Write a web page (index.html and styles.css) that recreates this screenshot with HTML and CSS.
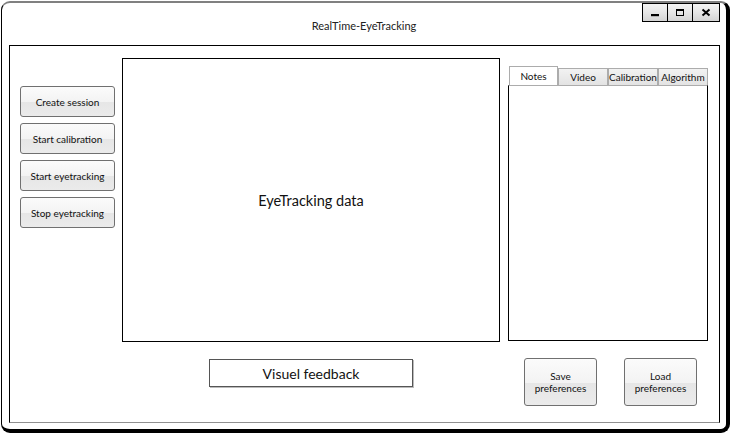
FILE: index.html
```html
<!DOCTYPE html>
<html lang="en">
<head>
  <meta charset="utf-8" />
  <title>RealTime-EyeTracking</title>
  <link rel="stylesheet" href="styles.css">
</head>

<body>
  <div class="window">
    <div class="titlebar">
      <span></span>
      <div class="title">RealTime-EyeTracking</div>
      <div class="controls">
        <div class="ctl">
          <svg width="10" height="8" viewBox="0 0 10 8"><rect x="1" y="5" width="8" height="2.2" fill="#000"/></svg>
        </div>
        <div class="ctl">
          <svg width="10" height="9" viewBox="0 0 10 9"><rect x="1.5" y="1.5" width="7" height="6" fill="none" stroke="#000" stroke-width="1"/><rect x="1" y="1" width="8" height="2" fill="#000"/></svg>
        </div>
        <div class="ctl wide">
          <svg width="10" height="9" viewBox="0 0 10 9"><path d="M1.5 1.5 L8.5 7.5 M8.5 1.5 L1.5 7.5" stroke="#000" stroke-width="2" fill="none"/></svg>
        </div>
      </div>
    </div>

    <div class="panel">
      <div class="actions">
        <button class="btn">Create session</button>
        <button class="btn">Start calibration</button>
        <button class="btn">Start eyetracking</button>
        <button class="btn">Stop eyetracking</button>
      </div>

      <div class="canvas">EyeTracking data</div>

      <div class="tabs">
        <div class="tab-strip">
          <div class="tab active">Notes</div>
          <div class="tab">Video</div>
          <div class="tab">Calibration</div>
          <div class="tab">Algorithm</div>
        </div>
        <div class="tab-body"></div>
      </div>

      <div class="feedback">Visuel feedback</div>

      <div class="prefs">
        <button class="btn tall">Save<br>preferences</button>
        <button class="btn tall">Load<br>preferences</button>
      </div>
    </div>
  </div>
</body>
</html>
```

FILE: styles.css
```css
html, body {
  margin: 0;
  padding: 0;
  background: #fff;
  font-family: Lato, 'Open Sans', sans-serif;
  color: #111;
}

.window {
  box-sizing: border-box;
  margin: 1px 0 0 1px;
  width: 729px;
  height: 432px;
  border-top: 2px solid #808080;
  border-left: 1px solid #000;
  border-right: 4px solid #000;
  border-bottom: 4px solid #000;
  border-radius: 9px;
  background: #fff;
}

.titlebar {
  display: grid;
  grid-template-columns: 1fr auto 1fr;
  height: 42px;
}

.title {
  align-self: center;
  padding-top: 3px;
  font-size: 11px;
  color: #222;
}

.controls {
  justify-self: end;
  align-self: start;
  display: flex;
  margin-right: 6px;
  height: 19px;
  border: 1px solid #000;
  box-sizing: border-box;
}

.ctl {
  width: 24px;
  display: flex;
  align-items: center;
  justify-content: center;
  background: linear-gradient(#f4f4f4 0%, #e6e6e6 50%, #d4d4d4 100%);
}

.ctl + .ctl { border-left: 1px solid #000; }
.ctl.wide { width: 26px; }

.panel {
  box-sizing: border-box;
  margin-left: 7px;
  width: 711px;
  height: 378px;
  border: 1px solid #000;
  border-bottom-color: #909090;
  display: grid;
  grid-template-columns: 95px 378px 202px;
  grid-template-rows: 284px auto;
  column-gap: 7px;
  padding: 12px 0 0 10px;
}

.actions {
  grid-column: 1;
  grid-row: 1;
  display: flex;
  flex-direction: column;
  gap: 6px;
  margin-top: 28px;
}

.btn {
  box-sizing: border-box;
  height: 31px;
  padding: 0;
  border: 1px solid #707070;
  border-radius: 3px;
  background: linear-gradient(#fbfbfb 0%, #f3f3f3 52%, #e6e6e6 52%, #ebebeb 100%);
  font-family: Lato, 'Open Sans', sans-serif;
  font-size: 10px;
  color: #111;
}

.canvas {
  grid-column: 2;
  grid-row: 1;
  box-sizing: border-box;
  border: 1px solid #000;
  display: flex;
  align-items: center;
  justify-content: center;
  font-size: 14.5px;
  color: #111;
}

.tabs {
  grid-column: 3;
  grid-row: 1;
  margin: 8px 0 0 1px;
  height: 275px;
  display: flex;
  flex-direction: column;
}

.tab-strip {
  display: flex;
  align-items: flex-end;
  height: 19px;
  padding-left: 1px;
}

.tab {
  box-sizing: border-box;
  height: 17px;
  width: 50px;
  border: 1px solid #acacac;
  border-bottom: none;
  background: linear-gradient(#f2f2f2, #e3e3e3);
  font-size: 10px;
  text-align: center;
  line-height: 16px;
}

.tab.active {
  height: 19px;
  width: 49px;
  background: #fff;
  line-height: 18px;
}

.tab-body {
  flex: 1;
  border: 1px solid #000;
  border-top-color: #acacac;
  margin-right: 1px;
}

.feedback {
  grid-column: 2;
  grid-row: 2;
  justify-self: center;
  align-self: start;
  box-sizing: border-box;
  margin-top: 17px;
  width: 204px;
  height: 28px;
  border: 1px solid #555;
  box-shadow: 1px 1px 0 #bbb;
  display: flex;
  align-items: center;
  justify-content: center;
  font-size: 14px;
  color: #111;
}

.prefs {
  grid-column: 3;
  grid-row: 2;
  display: flex;
  gap: 27px;
  margin-top: 16px;
  padding-left: 17px;
  align-self: start;
}

.btn.tall {
  width: 73px;
  height: 48px;
  line-height: 12px;
}
```
